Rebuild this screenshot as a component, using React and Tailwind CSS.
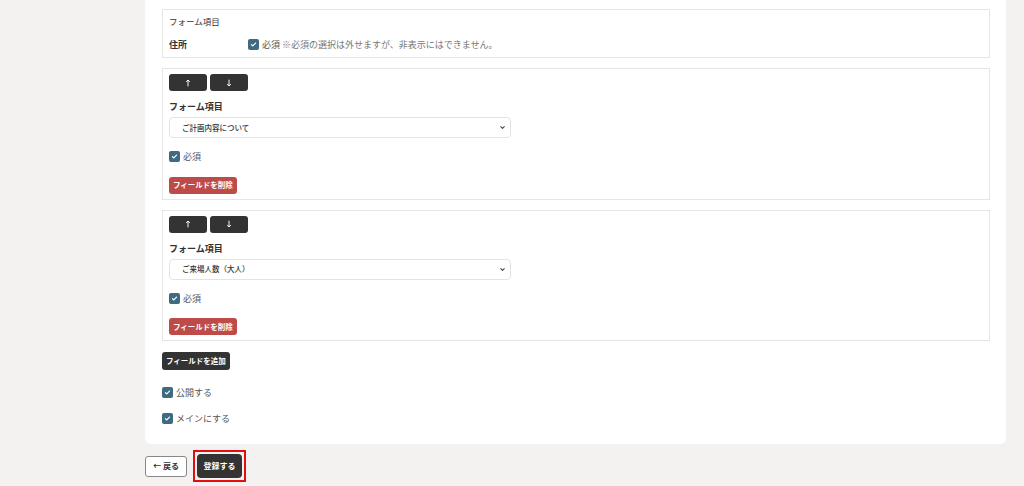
import { ChevronDown } from "lucide-react";

const FONT = { fontFamily: '"Noto Sans CJK JP", "Noto Sans", sans-serif' };

function Check({ label, className = "" }) {
  return (
    <label className={`flex items-center gap-[3px] text-[9px] text-[#555] ${className}`}>
      <span className="flex h-[11px] w-[11px] items-center justify-center rounded-[2px] bg-[#3e6a82]">
        <svg viewBox="0 0 12 12" className="h-[7px] w-[7px]" fill="none" stroke="white" strokeWidth="2" strokeLinecap="round" strokeLinejoin="round">
          <path d="M2.5 6.3l2.3 2.2L9.5 3.5" />
        </svg>
      </span>
      <span>{label}</span>
    </label>
  );
}

function Arrow({ up }) {
  return (
    <svg viewBox="0 0 8 10" className="h-[8px] w-[6px]" fill="none" stroke="white" strokeWidth="1.3">
      {up ? <path d="M4 9.5V1M1.5 3.5L4 1l2.5 2.5" /> : <path d="M4 0.5V9M1.5 6.5L4 9l2.5-2.5" />}
    </svg>
  );
}

function FieldBox({ value, className = "" }) {
  return (
    <div className={`border border-[#e6e6e4] px-[6px] pt-[5px] pb-[5px] ${className}`}>
      <div className="flex gap-[3px]">
        <button className="flex h-[17px] w-[38px] items-center justify-center rounded-[3px] bg-[#333]"><Arrow up /></button>
        <button className="flex h-[17px] w-[38px] items-center justify-center rounded-[3px] bg-[#333]"><Arrow /></button>
      </div>
      <p className="mt-[9px] text-[9px] font-bold leading-[13px] text-[#333]">フォーム項目</p>
      <div className="mt-[4px] flex h-[21px] w-[342px] items-center justify-between rounded-[4px] border border-[#e3e3e3] pl-[12px] pr-[4px] text-[7.5px] font-medium text-[#333]">
        <span>{value}</span>
        <ChevronDown className="h-[7px] w-[7px] text-[#444]" strokeWidth={3.5} />
      </div>
      <Check label="必須" className="mt-[12px]" />
      <div className="mt-[13px] flex h-[17px] w-fit items-center rounded-[3px] bg-[#be4b48] px-[4px] text-[7.5px] font-bold text-white">
        フィールドを削除
      </div>
    </div>
  );
}

export default function App() {
  return (
    <div className="h-[486px] w-[1024px] overflow-hidden bg-[#f3f2f0]" style={FONT}>
      <div className="ml-[145px] w-[861px] rounded-b-[6px] bg-white pl-[17px] pr-[16px] pt-[9px] pb-[19px]">
        <div className="h-[49px] border border-[#e6e6e4] px-[6px] pt-[5px]">
          <p className="text-[8.5px] leading-[13px] text-[#333]">フォーム項目</p>
          <div className="mt-[10px] flex items-center">
            <span className="w-[79px] text-[9px] font-bold text-[#333]">住所</span>
            <Check label={<>必須 <span className="text-[#777]">※必須の選択は外せますが、非表示にはできません。</span></>} />
          </div>
        </div>
        <FieldBox value="ご計画内容について" className="mt-[10px]" />
        <FieldBox value="ご来場人数（大人）" className="mt-[10px]" />
        <div className="mt-[11px] flex h-[18px] w-fit items-center rounded-[3px] bg-[#333] px-[4px] text-[7.5px] font-bold text-white">
          フィールドを追加
        </div>
        <Check label="公開する" className="mt-[16px]" />
        <Check label="メインにする" className="mt-[12px]" />
      </div>
      <div className="ml-[145px] mt-[6px] flex items-center gap-[6px]">
        <button className="flex h-[21px] w-[42px] items-center justify-center rounded-[3px] border border-[#888] bg-white text-[8px] font-bold text-[#333]">
          ← 戻る
        </button>
        <div className="border-2 border-[#e01010] p-[2px]">
          <button className="flex h-[24px] w-[45px] items-center justify-center rounded-[4px] bg-[#333] text-[8px] font-bold text-white">
            登録する
          </button>
        </div>
      </div>
    </div>
  );
}
